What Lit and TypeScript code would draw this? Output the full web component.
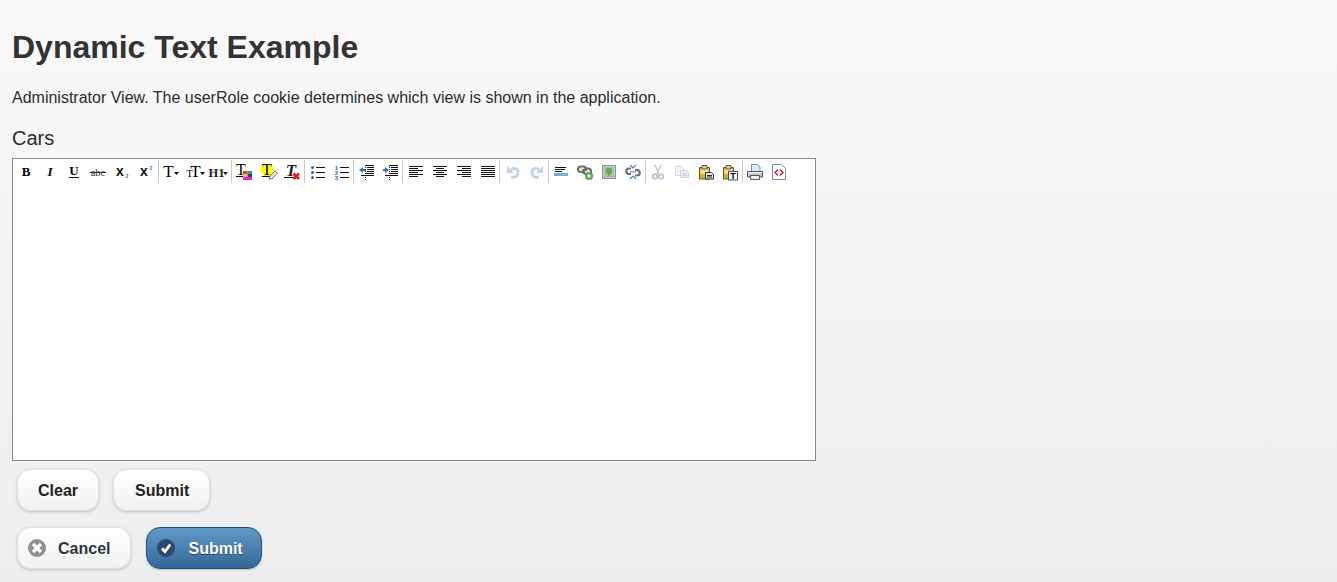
import { LitElement, html, css, svg } from "lit";
import { customElement } from "lit/decorators.js";

const lines = (rows: [number, number, number][], color = "#111") =>
  rows.map(([x1, x2, y]) => svg`<path d="M${x1} ${y + 0.5}H${x2}" stroke=${color} fill="none"/>`);

const serif = (t: string, x: number, y: number, size: number, extra: any = {}) =>
  svg`<text x=${x} y=${y} font-family="Liberation Serif" font-size=${size} font-weight=${extra.w ?? "normal"} font-style=${extra.s ?? "normal"} fill=${extra.f ?? "#000"} text-anchor=${extra.a ?? "middle"}>${t}</text>`;

const sans = (t: string, x: number, y: number, size: number, fill = "#111") =>
  svg`<text x=${x} y=${y} font-family="Liberation Sans" font-size=${size} font-weight="bold" fill=${fill} text-anchor="middle">${t}</text>`;

const caret = (x: number, y: number) => svg`<path d="M${x} ${y}h5l-2.5 3z" fill="#111"/>`;

const chain = (c = "#6b6f6b") => svg`<g fill="none" stroke=${c} stroke-width="2.2"><rect x="1" y="2.5" width="8" height="5.5" rx="2.7"/><rect x="6" y="4.5" width="8" height="5.5" rx="2.7"/></g><path d="M3 4.5h4M8 7.5h4" stroke="#e2e5e2" fill="none"/>`;

const clip = svg`<path d="M1.5 3.5h10v11.5h-10z" fill="#d8ad2e" stroke="#6f5410"/><path d="M2.5 5h8v5h-8z" fill="#f4e08c"/><path d="M4 1.5h5v3.5H4z" fill="#d4d2c0" stroke="#5f5a3a"/>`;

const icons: Record<string, any> = {
  bold: serif("B", 8, 12, 13, { w: "bold" }),
  italic: serif("I", 8, 12, 13, { w: "bold", s: "italic" }),
  underline: svg`${serif("U", 8, 11, 13, { w: "bold" })}<path d="M3 13.5h10" stroke="#000" fill="none"/>`,
  strike: svg`${serif("abc", 8, 11.5, 10.5, { f: "#333" })}<path d="M0 8.5h16" stroke="#333" fill="none"/>`,
  sub: svg`${sans("x", 6, 12, 14)}${sans("2", 13, 14, 5, "#2a6fc0")}`,
  sup: svg`${sans("x", 6, 12, 14)}${sans("2", 13, 6, 5, "#2a6fc0")}`,
  font: svg`${serif("T", 5.5, 13, 17)}${caret(11, 8)}`,
  size: svg`${serif("T", 2.5, 13, 11)}${serif("T", 8.5, 13, 17)}${caret(13, 8)}`,
  format: svg`${serif("H1", 5.5, 13, 12.5, { w: "bold", f: "#222" })}${caret(12, 8)}`,
  color: svg`${serif("T", 5, 11, 16)}<path d="M0 12.5h7" stroke="#000" fill="none"/><rect x="7" y="7" width="4.5" height="3" fill="#e33"/><rect x="11.5" y="7" width="4.5" height="3" fill="#3a3"/><rect x="7" y="10" width="4.5" height="3" fill="#fc2"/><rect x="11.5" y="10" width="4.5" height="3" fill="#23d"/><rect x="7" y="13" width="9" height="3" fill="#e2c"/>`,
  hilite: svg`<circle cx="7" cy="6" r="6.5" fill="#ff0"/>${serif("T", 7, 11, 16)}<path d="M2 12.5h8" stroke="#000" fill="none"/><path d="M9 15l1-3 5-5 2.5 2-5.5 6z" fill="#e8e4d8" stroke="#777"/>`,
  clear: svg`${serif("T", 7, 12, 17, { s: "italic", w: "bold", f: "#222" })}<path d="M0 13.5h10" stroke="#111" fill="none"/><path d="M9.5 9.5l5.5 5.5M15 9.5L9.5 15" stroke="#e01818" stroke-width="2.6" fill="none"/>`,
  ul: svg`${[2, 7, 12].map((y) => svg`<rect x="1" y=${y} width="3" height="3" rx="1.5" fill="#2a5fa8"/>`)}${lines([[6, 15, 3], [6, 15, 8], [6, 15, 13]])}`,
  ol: svg`${[6, 11, 16].map((y, i) => sans(String(i + 1), 2.5, y, 6, "#2a5fa8"))}${lines([[6, 15, 3], [6, 15, 8], [6, 15, 13]])}`,
  outdent: svg`<path d="M0 6L4 3v2h3v2H4v2z" fill="#2a6fc0"/>${lines([[7, 15, 1], [8, 15, 3], [8, 15, 5], [8, 15, 7], [7, 15, 9], [2, 15, 11]])}<path d="M6.5 1v15" stroke="#111" stroke-dasharray="1 1" fill="none"/>`,
  indent: svg`<path d="M6 6L2 3v2H0v2h2v2z" fill="#2a6fc0"/>${lines([[7, 15, 1], [8, 15, 3], [8, 15, 5], [8, 15, 7], [7, 15, 9], [2, 15, 11]])}<path d="M6.5 1v15" stroke="#111" stroke-dasharray="1 1" fill="none"/>`,
  left: lines([[1, 15, 2], [1, 10, 4], [1, 15, 6], [1, 10, 8], [1, 15, 10], [1, 10, 12]]),
  center: lines([[1, 15, 2], [4, 12, 4], [1, 15, 6], [4, 12, 8], [1, 15, 10], [4, 12, 12]]),
  right: lines([[1, 15, 2], [6, 15, 4], [1, 15, 6], [6, 15, 8], [1, 15, 10], [6, 15, 12]]),
  justify: lines([[1, 15, 2], [1, 15, 4], [1, 15, 6], [1, 15, 8], [1, 15, 10], [1, 15, 12]]),
  undo: svg`<path d="M6 13c4 1 7-1 7-4.5s-3-5-7-3" fill="none" stroke="#c3d3ea" stroke-width="3"/><path d="M2 2v7h7z" fill="#c3d3ea"/>`,
  redo: svg`<path d="M10 13c-4 1-7-1-7-4.5s3-5 7-3" fill="none" stroke="#c3d3ea" stroke-width="3"/><path d="M14 2v7H7z" fill="#c3d3ea"/>`,
  hr: svg`${lines([[2, 13, 3], [2, 12, 5], [2, 9, 7]], "#111")}<rect x="1" y="9" width="14" height="3" fill="#7ea6d8"/>`,
  link: svg`${chain()}<circle cx="12" cy="12" r="4" fill="#49a84c"/><path d="M10 12h4M12 10v4" stroke="#fff" stroke-width="1.4" fill="none"/>`,
  image: svg`<rect x="1.5" y="1.5" width="13" height="13" fill="#b9cde6" stroke="#7f98b8"/><rect x="3" y="3" width="10" height="10" fill="#a9c79a"/><circle cx="8" cy="7" r="3.2" fill="#6fa84c"/><path d="M7.5 9h1v3h-1z" fill="#8a6a3a"/><path d="M3 12h10v1H3z" fill="#c9a860"/>`,
  unlink: svg`<g fill="none" stroke="#6b6f6b" stroke-width="2.2"><path d="M6 4.5H4a2.7 2.7 0 0 0 0 5.5h2"/><path d="M10 6h2a2.7 2.7 0 0 1 0 5.5h-2"/></g><path d="M5 7.8h6" stroke="#6b6f6b" fill="none"/><path d="M5 1l3 3 3-3M5 15l3-3 3 3" stroke="#4a82c8" fill="none" stroke-width="1.2"/>`,
  cut: svg`<path d="M5 1l4 9M11 1L7 10" stroke="#c9ccd2" stroke-width="1.8" fill="none"/><circle cx="5" cy="12.5" r="2.3" fill="none" stroke="#a9bcd8" stroke-width="1.5"/><circle cx="11" cy="12.5" r="2.3" fill="none" stroke="#a9bcd8" stroke-width="1.5"/>`,
  copy: svg`<path d="M1.5 2.5h6l2 2v7h-8z" fill="#f6f6f6" stroke="#d8d8d8"/><path d="M6.5 6.5h6l2 2v5h-8z" fill="#eef2f8" stroke="#c4d0e2"/><path d="M8 9.5h5M8 11.5h5" stroke="#c4d0e2" fill="none"/>`,
  paste: svg`${clip}<path d="M7.5 8.5h6l2 2v4.5h-8z" fill="#e4e4e4" stroke="#333"/><path d="M9 11.5h5M9 13h5" stroke="#222" fill="none"/>`,
  pastetext: svg`${clip}<rect x="6.5" y="7.5" width="9" height="8.5" fill="#fff" stroke="#2a4f8a"/>${sans("T", 11, 14.5, 9, "#000")}`,
  print: svg`<path d="M4.5 .5h6l2.5 2.5v5h-8.5z" fill="#dfe8f6" stroke="#6f8fbf"/><path d="M.5 7.5h15v5.5H.5z" fill="#c4c4c4" stroke="#555"/><rect x="1" y="8" width="14" height="1.5" fill="#eee"/><path d="M3.5 11.5h9v4h-9z" fill="#f2f2f2" stroke="#555"/>`,
  source: svg`<path d="M1.5 .5h9l4 4v11h-13z" fill="#fff" stroke="#6f8fb0"/><path d="M7 5.5L4 8.5l3 3M9 5.5l3 3-3 3" stroke="#d8131a" stroke-width="1.4" fill="none"/>`,
};

const groups: { tools: string[]; nudge?: boolean }[] = [
  { tools: ["bold", "italic", "underline", "strike", "sub", "sup"] },
  { tools: ["font", "size", "format"] },
  { tools: ["color", "hilite", "clear"] },
  { tools: ["ul", "ol"], nudge: true },
  { tools: ["outdent", "indent"], nudge: true },
  { tools: ["left", "center", "right", "justify"], nudge: true },
  { tools: ["undo", "redo"], nudge: true },
  { tools: ["hr", "link", "image", "unlink"] },
  { tools: ["cut", "copy", "paste", "pastetext"] },
  { tools: ["print", "source"] },
];

@customElement("app-root")
export class AppRoot extends LitElement {
  static styles = css`
    :host {
      display: block;
      height: 582px;
      box-sizing: border-box;
      padding: 30px 12px 0;
      background: linear-gradient(#f9f9f9, #eeeeee);
      font-family: "Liberation Sans", Arial, sans-serif;
      color: #2b2b2b;
      overflow: hidden;
    }
    h1 {
      margin: 0;
      font-size: 32px;
      line-height: 34px;
      font-weight: bold;
      color: #333;
    }
    p {
      margin: 24px 0 0;
      font-size: 16px;
      line-height: 20px;
    }
    .label {
      margin-top: 19px;
      font-size: 20px;
      line-height: 23px;
    }
    .editor {
      margin-top: 8px;
      width: 804px;
      height: 303px;
      box-sizing: border-box;
      border: 1px solid #8a8a8a;
      background: #fff;
    }
    .toolbar {
      display: flex;
      align-items: flex-start;
      padding: 1px 0 0 1px;
    }
    .group {
      display: flex;
      height: 23px;
    }
    .group + .group {
      border-left: 1px solid #c8c8c8;
    }
    .tool {
      width: 24px;
      height: 23px;
      display: flex;
      align-items: center;
      justify-content: center;
    }
    .tool svg {
      width: 16px;
      height: 16px;
      display: block;
      overflow: visible;
    }
    .nudge .tool {
      padding-left: 2px;
      box-sizing: border-box;
    }
    .row {
      display: flex;
      gap: 14px;
      margin: 8px 0 0 5px;
    }
    .row + .row {
      margin-top: 16px;
    }
    .btn {
      height: 42px;
      box-sizing: border-box;
      display: flex;
      align-items: center;
      border: 1px solid #e2e2e2;
      border-radius: 14px;
      background: linear-gradient(#ffffff, #f1f1f1);
      box-shadow: 0 1px 3px rgba(0, 0, 0, 0.22);
      font-weight: bold;
      font-size: 16px;
      color: #222;
      padding: 1px 20px 0;
      text-shadow: 0 1px 0 #fff;
    }
    .btn.submit-plain {
      padding: 1px 20px 0 21px;
    }
    .btn.cancel {
      padding: 1px 20px 0 10px;
      gap: 12px;
      color: #2c3440;
    }
    .btn.primary {
      margin-left: 1px;
      padding: 1px 18px 0 10px;
      gap: 13px;
      color: #fff;
      border: 1px solid #1f4f78;
      background: linear-gradient(#5f9ac7, #356797);
      box-shadow: 0 1px 2px rgba(0, 0, 0, 0.2);
      text-shadow: 0 1px 1px rgba(0, 0, 0, 0.45);
    }
    .btn svg {
      width: 18px;
      height: 18px;
      display: block;
      margin-top: -1px;
    }
  `;

  render() {
    return html`
      <h1>Dynamic Text Example</h1>
      <p>Administrator View. The userRole cookie determines which view is shown in the application.</p>
      <div class="label">Cars</div>
      <div class="editor">
        <div class="toolbar">
          ${groups.map(
            (g) => html`<div class="group ${g.nudge ? "nudge" : ""}">
              ${g.tools.map((n) => html`<div class="tool"><svg viewBox="0 0 16 16">${icons[n]}</svg></div>`)}
            </div>`
          )}
        </div>
      </div>
      <div class="row">
        <div class="btn">Clear</div>
        <div class="btn submit-plain">Submit</div>
      </div>
      <div class="row">
        <div class="btn cancel">
          <svg viewBox="0 0 18 18"><circle cx="9" cy="9" r="9" fill="#8f8f8f" /><path d="M5 5l8 8M13 5l-8 8" stroke="#fff" stroke-width="3.2" fill="none" /></svg>
          Cancel
        </div>
        <div class="btn primary">
          <svg viewBox="0 0 18 18"><circle cx="9" cy="9" r="9" fill="#2b4a6e" /><path d="M5 9.5l3 3 5.2-7" stroke="#fff" stroke-width="2.8" fill="none" /></svg>
          Submit
        </div>
      </div>
    `;
  }
}
